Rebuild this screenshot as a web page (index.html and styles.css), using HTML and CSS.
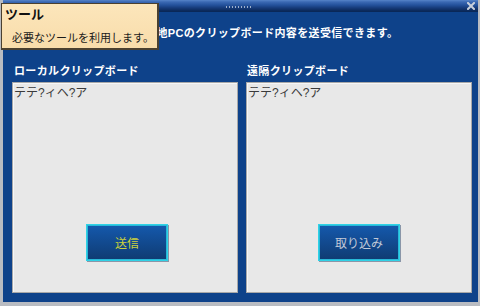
FILE: index.html
```html
<!DOCTYPE html>
<html lang="ja">
<head>
<meta charset="utf-8">
<title>クリップボード</title>
<link rel="stylesheet" href="styles.css">
</head>
<body>
<div class="window">
  <div class="titlebar">
    <span class="grip"></span>
    <span class="close">
      <svg width="8" height="8" viewBox="0 0 8 8"><path d="M1 1L7 7M7 1L1 7" stroke="#c8d0dc" stroke-width="2" stroke-linecap="square"/></svg>
    </span>
  </div>
  <div class="content">
    <p class="desc">遠隔PCと現地PCのクリップボード内容を送受信できます。</p>
    <div class="columns">
      <section class="col">
        <h2 class="label">ローカルクリップボード</h2>
        <div class="panel">
          <div class="clip">テテ?ィヘ?ア</div>
          <button class="btn btn-send">送信</button>
        </div>
      </section>
      <section class="col">
        <h2 class="label">遠隔クリップボード</h2>
        <div class="panel">
          <div class="clip">テテ?ィヘ?ア</div>
          <button class="btn btn-get">取り込み</button>
        </div>
      </section>
    </div>
  </div>
</div>
<div class="tooltip">
  <div class="tip-title">ツール</div>
  <div class="tip-text">必要なツールを利用します。</div>
</div>
</body>
</html>
```

FILE: styles.css
```css
* { box-sizing: border-box; }
html, body {
  margin: 0;
  padding: 0;
  width: 480px;
  height: 306px;
  overflow: hidden;
}
body {
  background: #b9bcc2;
  font-family: "Liberation Sans", "Noto Sans CJK JP", sans-serif;
  position: relative;
}
.window {
  margin-left: 3px;
  width: 475px;
  height: 302px;
  background: #0e428a;
  display: flex;
  flex-direction: column;
}
.titlebar {
  height: 12px;
  background: linear-gradient(#5684c8 0px, #3a68b2 2px, #24529c 5px, #163a78 8px, #0a2858 11px, #0a2858 12px);
  display: flex;
  align-items: center;
  justify-content: center;
  position: relative;
}
.grip {
  width: 26px;
  height: 2px;
  margin-left: -3px;
  margin-top: 1px;
  background: repeating-linear-gradient(90deg, #9eb0cc 0 1px, transparent 1px 3px);
}
.close {
  position: absolute;
  right: 3px;
  top: 2px;
  width: 8px;
  height: 8px;
  display: flex;
}
.content {
  flex: 1;
  display: flex;
  flex-direction: column;
  padding: 14px 6px 9px 9px;
}
.desc {
  margin: 0;
  padding-left: 83px;
  color: #ffffff;
  font-size: 11px;
  font-weight: bold;
  line-height: 14px;
  height: 14px;
  letter-spacing: 0.35px;
  white-space: nowrap;
}
.columns {
  flex: 1;
  display: grid;
  grid-template-columns: 1fr 1fr;
  column-gap: 8px;
  margin-top: 24px;
}
.col {
  display: flex;
  flex-direction: column;
}
.label {
  margin: 0 0 4px 2px;
  color: #ffffff;
  font-size: 11px;
  font-weight: bold;
  line-height: 14px;
  letter-spacing: 0.35px;
}
.col + .col .label {
  margin-left: 1px;
}
.panel {
  flex: 1;
  background: #e8e8e8;
  border: 1px solid #a8a8a8;
  box-shadow: inset 1px 1px 0 #f6f6f6;
  display: flex;
  flex-direction: column;
  align-items: center;
  padding: 3px 1px 0 1px;
}
.clip {
  align-self: stretch;
  color: #3a3a3a;
  font-size: 12px;
  line-height: 14px;
}
.btn {
  margin-top: auto;
  margin-bottom: 31px;
  width: 82px;
  height: 37px;
  border: 1px solid #2fd2e6;
  box-shadow: inset 0 0 0 1px #28b8d8, 1px 1px 0 #8a96a8;
  background: linear-gradient(#1559ad, #0f3b72);
  font-family: "Liberation Sans", "Noto Sans CJK JP", sans-serif;
  font-size: 12px;
  padding: 0;
  cursor: pointer;
}
.btn-send {
  color: #cdd23a;
  margin-left: 4px;
}
.btn-get {
  color: #c2cad8;
}
.tooltip {
  position: absolute;
  left: 1px;
  top: 3px;
  width: 158px;
  height: 47px;
  background: linear-gradient(#fce6bb, #f8dcaa);
  border: 1px solid #4a4030;
  border-right-width: 2px;
  border-bottom-width: 2px;
  padding: 3px 0 0 3px;
}
.tip-title {
  color: #111111;
  font-size: 13px;
  font-weight: bold;
  line-height: 16px;
}
.tip-text {
  margin: 8px 0 0 7px;
  color: #1a1a1a;
  font-size: 11px;
  line-height: 14px;
  white-space: nowrap;
}
```
